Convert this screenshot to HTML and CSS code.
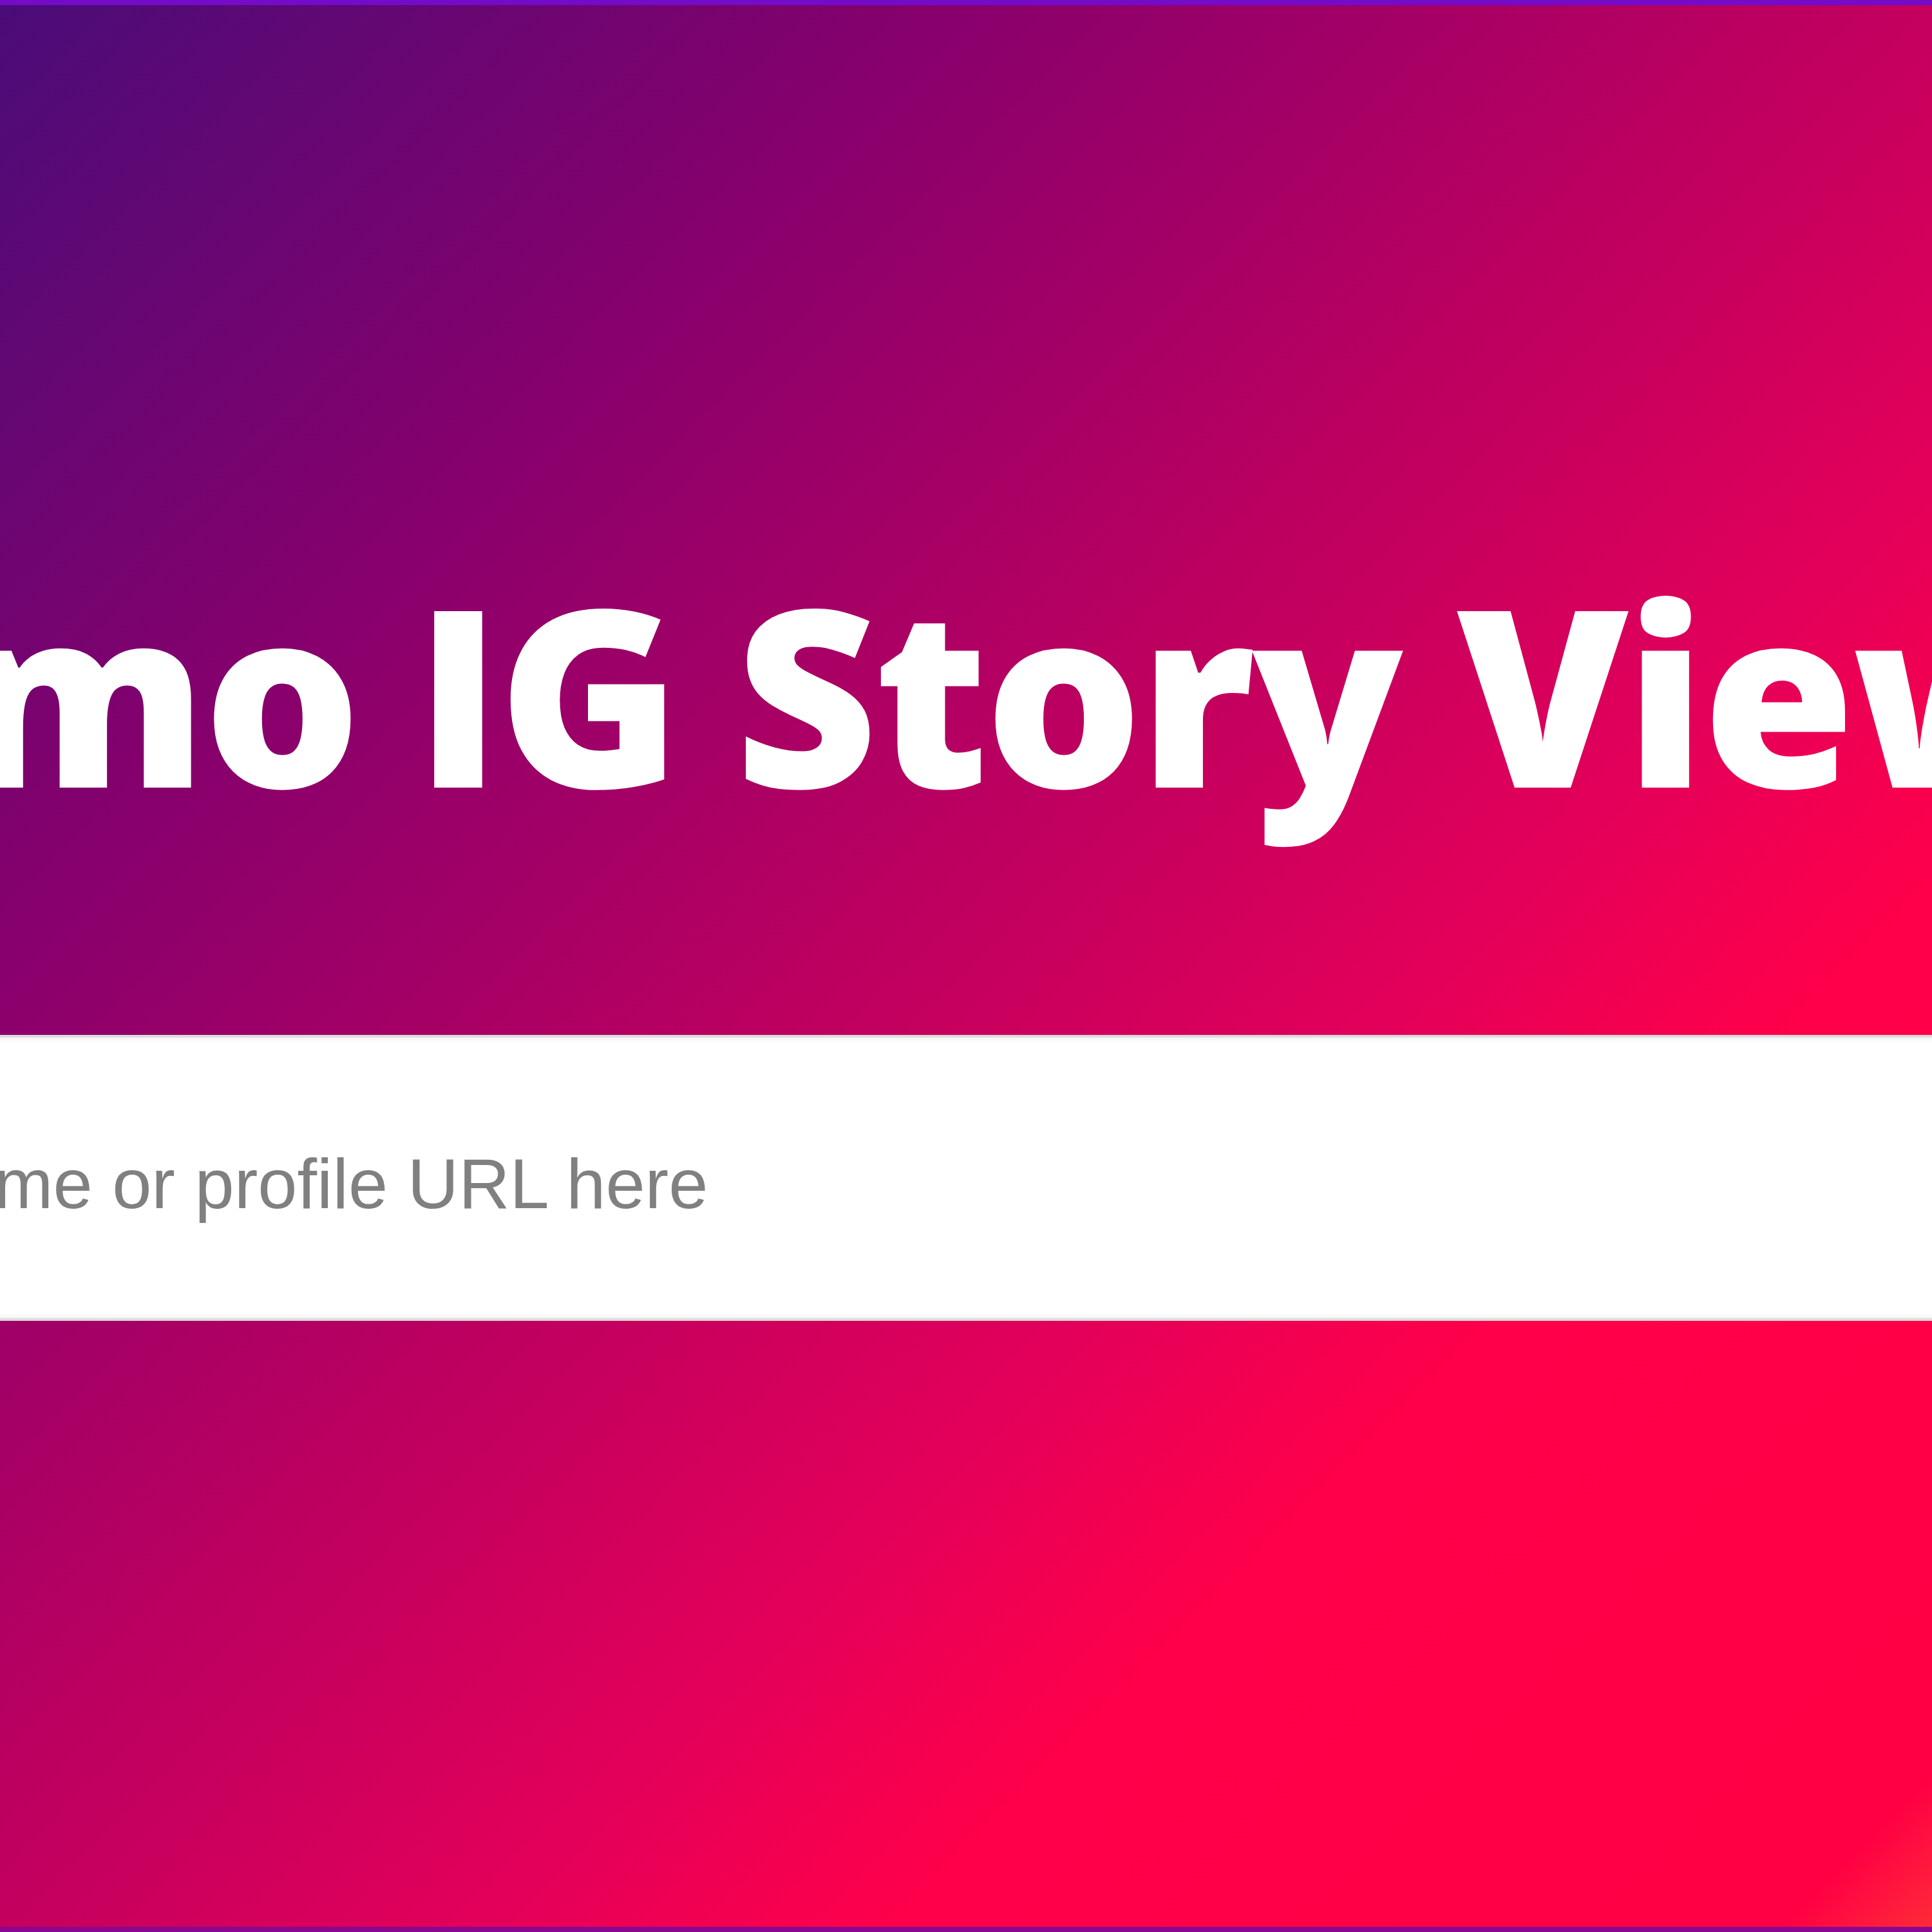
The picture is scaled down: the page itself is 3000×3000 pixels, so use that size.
FILE: index.html
```html
<!DOCTYPE html>
<html lang="en">
<head>
<meta charset="utf-8">
<title>Demo IG Story Viewer</title>
<link rel="stylesheet" href="styles.css">
</head>
<body>
<main class="hero">
  <h1 class="hero-title">Demo IG Story Viewer</h1>
  <form class="search">
    <input class="search-input" type="text" placeholder="Enter username or profile URL here">
  </form>
</main>
</body>
</html>
```
FILE: styles.css
```css
html {
  background: linear-gradient(to bottom, #730bc8, #8a0890);
}
body {
  margin: 8px 0;
  overflow: hidden;
  height: 2984px;
}
.hero {
  height: 2984px;
  box-sizing: border-box;
  padding-top: 875px;
  background: linear-gradient(135deg,
    #4a0c78 0%,
    #88006c 25%,
    #c4005e 50%,
    #e2005a 62%,
    #ff004a 73%,
    #ff0044 96%,
    #ff2a38 100%);
  display: flex;
  flex-direction: column;
}
.hero-title {
  margin: 0 0 0 -572px;
  font-family: "Open Sans", "Liberation Sans", sans-serif;
  font-weight: 800;
  font-size: 384px;
  line-height: 1;
  letter-spacing: -5px;
  word-spacing: -6px;
  color: #fff;
  white-space: nowrap;
}
.search {
  margin: 340px 0 0 -800px;
  width: calc(100% + 1600px);
}
.search-input {
  display: block;
  width: 100%;
  height: 444px;
  box-sizing: border-box;
  margin: 0;
  padding: 16px 0 0 157px;
  border: 4px solid #dcdcdc;
  box-shadow: inset 0 0 8px 2px #eeeeee;
  background: #fff;
  outline: none;
  font-family: "Liberation Sans", Arial, sans-serif;
  font-size: 110px;
  color: #333;
}
.search-input::placeholder {
  color: #808080;
  opacity: 1;
}
```
